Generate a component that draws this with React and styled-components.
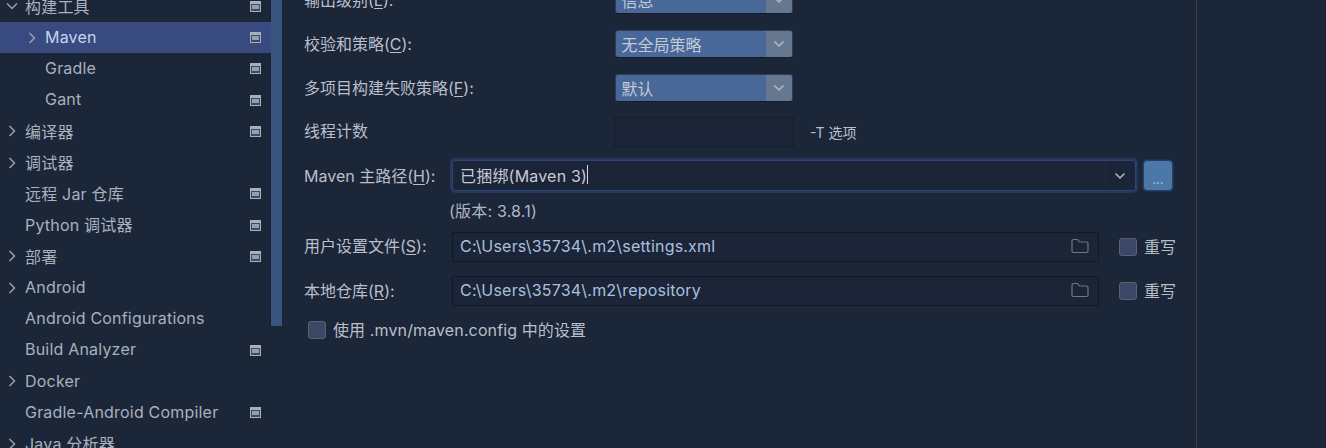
import React from "react";
import styled, { createGlobalStyle } from "styled-components";

const Global = createGlobalStyle`
  html, body { margin: 0; padding: 0; background: #1c2639; overflow: hidden; }
  #root { width: 1326px; height: 448px; }
`;
const FONT = `Inter, "Noto Sans CJK SC", sans-serif`;

const Page = styled.div`
  width: 1326px; height: 448px; display: flex; overflow: hidden;
  background: #1c2639; color: #b9bfc9; font-family: ${FONT}; font-size: 16px;
`;
const Sidebar = styled.aside`
  width: 271px; flex: none; height: 448px; overflow: hidden; position: relative;
`;
const TreeList = styled.div`
  margin-top: -9.25px;
`;
const Row = styled.div`
  height: 31.25px; display: flex; align-items: center; position: relative;
  padding-left: ${p => (p.$child ? 45 : 25)}px;
  background: ${p => (p.$selected ? "#394a80" : "transparent")};
  color: ${p => (p.$selected ? "#c6d4ef" : "#a9b1bd")};
  letter-spacing: 0.2px;
  white-space: nowrap;
`;
const RowText = styled.span`
  padding-bottom: 1.5px;
`;
const Chevron = styled.svg`
  position: absolute; left: ${p => (p.$child ? 26 : 6)}px; top: 50%;
  width: 12px; height: 12px; margin-top: -6px;
  fill: none; stroke: #98a0ac; stroke-width: 1.5;
`;
const PageIcon = styled.svg`
  position: absolute; left: 250px; top: 50%; margin-top: -5.5px;
  width: 11px; height: 11px;
`;
const ScrollWrap = styled.div`
  width: 11px; flex: none; height: 326px; background: #3a5480;
  box-shadow: 1px 0 0 #182033, 0 1px 0 #182033, -1px 0 0 #182033;
`;
const Main = styled.main`
  width: 915px; flex: none; height: 448px; box-sizing: border-box;
  border-right: 1px solid #3a4252; padding-left: 22px; overflow: hidden;
  color: #b9bfc9;
`;
const FormRows = styled.div`
  margin-top: -14px; display: flex; flex-direction: column;
`;
const FormRow = styled.div`
  display: flex; align-items: center; height: ${p => p.$h || 29}px;
  margin-top: ${p => p.$mt || 0}px;
`;
const Label = styled.label`
  width: ${p => p.$w || 311}px; flex: none; white-space: nowrap;
  padding-bottom: ${p => p.$pb ?? 2}px;
  u { text-underline-offset: 2px; }
`;
const Select = styled.div`
  width: 178px; height: 28px; align-self: flex-start; box-sizing: border-box; display: flex; align-items: stretch;
  background: #48689a; border-radius: 3px; border: 1px solid #2f3e5c;
  border-bottom-color: #141c2c; color: #c5cbd3; overflow: hidden;
`;
const SelectText = styled.span`
  flex: 1; padding-left: 5.5px; display: flex; align-items: center;
`;
const SelectArrow = styled.span`
  width: 26px; flex: none; background: #65788f; display: flex;
  align-items: center; justify-content: center;
`;
const Caret = styled.svg`
  width: 12px; height: 8px; fill: none; stroke: ${p => p.$c || "#b5bcc7"}; stroke-width: 1.5;
`;
const PlainInput = styled.div`
  width: 180px; height: 30px; box-sizing: border-box; background: #1b2537;
  border: 1px solid #151d2e; margin-left: -1px;
`;
const Hint = styled.span`
  margin-left: 16px; font-size: 14px; color: #b9bfc9;
`;
const ComboWrap = styled.div`
  width: 684px; height: 31px; box-sizing: border-box; margin-left: -1px;
  display: flex; align-items: center; background: #1b2537;
  border: 1px solid #2a4676; border-radius: 3px; box-shadow: 0 0 0 2px #26375a;
`;
const ComboText = styled.div`
  flex: 1; padding: 0 0 2px 7px; color: #c4cbd6; letter-spacing: 0.2px;
  display: flex; align-items: center;
`;
const TextCaret = styled.span`
  display: inline-block; width: 1px; height: 19px; background: #d4d8de;
`;
const ComboArrow = styled.div`
  width: 27px; align-self: stretch; margin: 2px 2px 2px 0; flex: none;
  border-left: 1px solid #222c40; display: flex; align-items: center; justify-content: center;
`;
const BrowseButton = styled.button`
  width: 30px; height: 31px; margin-left: 7px; padding: 0 0 4px; box-sizing: border-box;
  background: #4b77a9; border: 1px solid #2a3e63; border-radius: 4px; box-shadow: 0 0 0 1px #1f3052;
  color: #aebccd; font: 13px ${FONT}; line-height: 1; display: flex; align-items: flex-end; justify-content: center;
`;
const Version = styled.div`
  margin-left: 145px; margin-top: 10px; height: 20px; line-height: 20px; color: #b0b7c2;
  letter-spacing: 0.2px;
`;
const PathInput = styled.div`
  width: 647px; height: 30px; box-sizing: border-box; margin-left: -1px;
  padding: 0 7px 3px 7px; display: flex; align-items: center; justify-content: space-between;
  background: #1b2537; border: 1px solid #111928; color: #a9c0df; letter-spacing: 0.2px;
`;
const FolderIcon = styled.svg`
  width: 18px; height: 16px; fill: none; stroke: #6f7783; stroke-width: 1.2; margin-right: 2px;
`;
const Box = styled.span`
  width: 18px; height: 18px; box-sizing: border-box; flex: none; display: block;
  background: #3b4767; border: 1px solid #5a6270; border-radius: 3px;
  margin-left: ${p => p.$ml || 0}px; margin-right: ${p => p.$mr || 0}px;
`;
const BoxLabel = styled.span`
  color: #b9bfc9; white-space: nowrap; letter-spacing: ${p => p.$ls ?? 0}px;
  padding-bottom: 2px;
`;

const tree = [
  { t: "构建工具", open: true, arrow: true, icon: true },
  { t: "Maven", child: true, sel: true, arrow: true, icon: true },
  { t: "Gradle", child: true, icon: true },
  { t: "Gant", child: true, icon: true },
  { t: "编译器", arrow: true, icon: true },
  { t: "调试器", arrow: true },
  { t: "远程 Jar 仓库", icon: true },
  { t: "Python 调试器", icon: true },
  { t: "部署", arrow: true, icon: true },
  { t: "Android", arrow: true },
  { t: "Android Configurations" },
  { t: "Build Analyzer", icon: true },
  { t: "Docker", arrow: true },
  { t: "Gradle-Android Compiler", icon: true },
  { t: "Java 分析器", arrow: true },
];

const Tri = ({ open, child }) => (
  <Chevron $child={child} viewBox="0 0 12 12">
    <path d={open ? "M1 3.5 L6 8.5 L11 3.5" : "M3.5 1 L8.5 6 L3.5 11"} />
  </Chevron>
);
const Pg = () => (
  <PageIcon viewBox="0 0 11 11">
    <rect x="0.5" y="0.5" width="10" height="10" fill="#3e4a60" stroke="#aab0ba" />
    <rect x="0" y="0" width="11" height="3" fill="#aab0ba" />
    <rect x="2" y="4" width="7" height="4" fill="#8e9fb8" />
  </PageIcon>
);
const Down = ({ c }) => (
  <Caret $c={c} viewBox="0 0 12 8"><path d="M1.5 1.5 L6 6 L10.5 1.5" /></Caret>
);
const Folder = () => (
  <FolderIcon viewBox="0 0 18 16">
    <path d="M1 3 a1.5 1.5 0 0 1 1.5-1.5 h4 l2 2.5 h7 a1.5 1.5 0 0 1 1.5 1.5 v7.5 a1.5 1.5 0 0 1-1.5 1.5 h-13 a1.5 1.5 0 0 1-1.5-1.5 z" />
  </FolderIcon>
);

export default function App() {
  return (
    <Page>
      <Global />
      <Sidebar>
        <TreeList>
          {tree.map(r => (
            <Row key={r.t} $child={r.child} $selected={r.sel}>
              {r.arrow && <Tri open={r.open} child={r.child} />}
              <RowText>{r.t}</RowText>
              {r.icon && <Pg />}
            </Row>
          ))}
        </TreeList>
      </Sidebar>
      <ScrollWrap />
      <Main>
        <FormRows>
          <FormRow>
            <Label $pb={4}>输出级别(<u>L</u>):</Label>
            <Select><SelectText>信息</SelectText><SelectArrow><Down /></SelectArrow></Select>
          </FormRow>
          <FormRow $mt={15}>
            <Label $pb={4}>校验和策略(<u>C</u>):</Label>
            <Select><SelectText>无全局策略</SelectText><SelectArrow><Down /></SelectArrow></Select>
          </FormRow>
          <FormRow $mt={15}>
            <Label $pb={4}>多项目构建失败策略(<u>F</u>):</Label>
            <Select><SelectText>默认</SelectText><SelectArrow><Down /></SelectArrow></Select>
          </FormRow>
          <FormRow $h={30} $mt={14}>
            <Label $pb={4}>线程计数</Label>
            <PlainInput />
            <Hint>-T 选项</Hint>
          </FormRow>
          <FormRow $h={31} $mt={13}>
            <Label $w={149}>Maven 主路径(<u>H</u>):</Label>
            <ComboWrap>
              <ComboText>已捆绑(Maven 3)<TextCaret /></ComboText>
              <ComboArrow><Down /></ComboArrow>
            </ComboWrap>
            <BrowseButton>...</BrowseButton>
          </FormRow>
          <Version>(版本: 3.8.1)</Version>
          <FormRow $h={30} $mt={11}>
            <Label $w={149} $pb={4}>用户设置文件(<u>S</u>):</Label>
            <PathInput>C:\Users\35734\.m2\settings.xml<Folder /></PathInput>
            <Box $ml={20} $mr={7} />
            <BoxLabel>重写</BoxLabel>
          </FormRow>
          <FormRow $h={30} $mt={14}>
            <Label $w={149}>本地仓库(<u>R</u>):</Label>
            <PathInput>C:\Users\35734\.m2\repository<Folder /></PathInput>
            <Box $ml={20} $mr={7} />
            <BoxLabel>重写</BoxLabel>
          </FormRow>
          <FormRow $h={18} $mt={15}>
            <Box $ml={4} $mr={7} />
            <BoxLabel $ls={0.12}>使用 .mvn/maven.config 中的设置</BoxLabel>
          </FormRow>
        </FormRows>
      </Main>
    </Page>
  );
}
